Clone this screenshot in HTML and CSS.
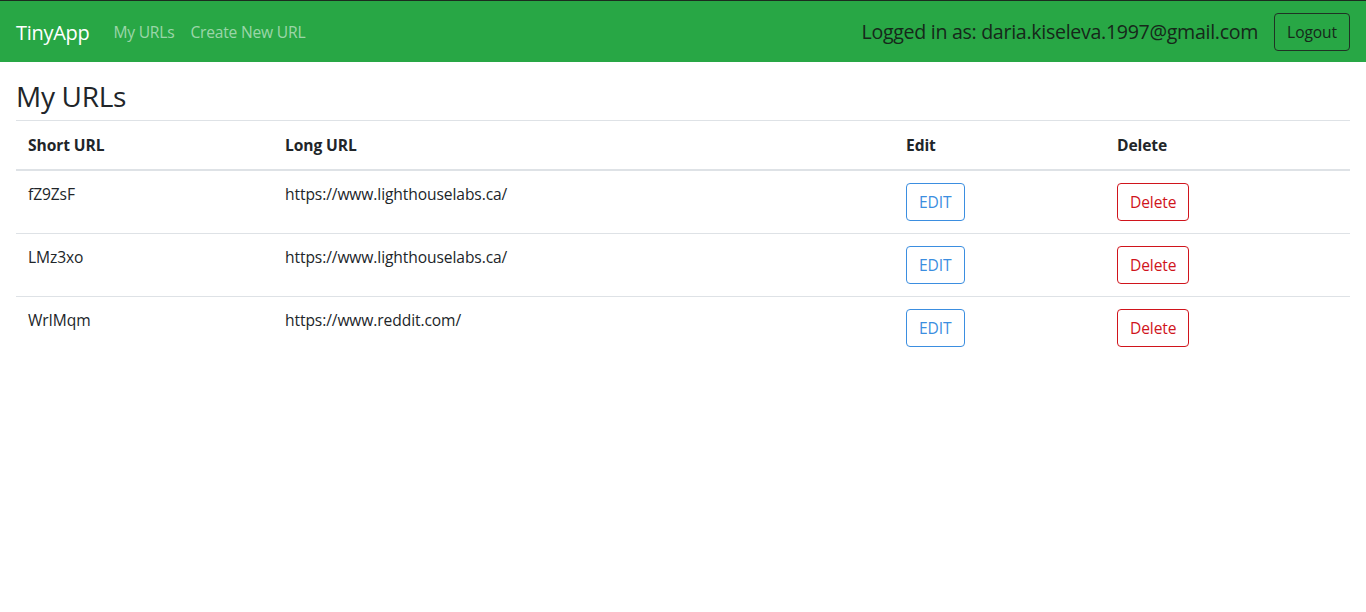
FILE: index.html
```html
<!DOCTYPE html>
<html lang="en">
<head>
<meta charset="utf-8">
<title>TinyApp</title>
<link rel="stylesheet" href="styles.css">
</head>
<body>
<nav class="navbar">
  <div class="nav-left">
    <a class="brand" href="#">TinyApp</a>
    <a class="nav-link" href="#">My URLs</a>
    <a class="nav-link" href="#">Create New URL</a>
  </div>
  <div class="nav-right">
    <span class="user">Logged in as: daria.kiseleva.1997@gmail.com</span>
    <button class="btn btn-dark">Logout</button>
  </div>
</nav>
<main class="content">
  <h2 class="title">My URLs</h2>
  <table class="table">
    <thead>
      <tr>
        <th class="c-short">Short URL</th>
        <th class="c-long">Long URL</th>
        <th class="c-edit">Edit</th>
        <th class="c-del">Delete</th>
      </tr>
    </thead>
    <tbody>
      <tr>
        <td>fZ9ZsF</td>
        <td>https://www.lighthouselabs.ca/</td>
        <td><button class="btn btn-blue">EDIT</button></td>
        <td><button class="btn btn-red">Delete</button></td>
      </tr>
      <tr>
        <td>LMz3xo</td>
        <td>https://www.lighthouselabs.ca/</td>
        <td><button class="btn btn-blue">EDIT</button></td>
        <td><button class="btn btn-red">Delete</button></td>
      </tr>
      <tr>
        <td>WrIMqm</td>
        <td>https://www.reddit.com/</td>
        <td><button class="btn btn-blue">EDIT</button></td>
        <td><button class="btn btn-red">Delete</button></td>
      </tr>
    </tbody>
  </table>
</main>
</body>
</html>
```
FILE: styles.css
```css
* { box-sizing: border-box; }
html, body { margin: 0; padding: 0; }
body {
  font-family: "Open Sans", "Noto Sans", sans-serif;
  font-size: 16px;
  line-height: 1.5;
  color: #212529;
  background: #fff;
}
.navbar {
  display: flex;
  align-items: center;
  justify-content: space-between;
  height: 62px;
  padding: 0 16px;
  background: #28a745;
  border-top: 1px solid #1c2b1f;
}
.nav-left { display: flex; align-items: center; padding-top: 2px; }
.brand {
  color: #fff;
  font-size: 20px;
  text-decoration: none;
  margin-right: 16px;
  letter-spacing: -0.3px;
}
.nav-link {
  color: rgba(255,255,255,0.55);
  text-decoration: none;
  padding: 0 8px;
  font-size: 15.6px;
  letter-spacing: -0.2px;
}
.nav-right { display: flex; align-items: center; }
.user {
  font-size: 19.6px;
  color: #16281a;
  margin-right: 16px;
  letter-spacing: -0.3px;
}
.btn {
  font-family: inherit;
  font-size: 15.6px;
  line-height: 24px;
  padding: 6px 12px;
  background: transparent;
  border-radius: 4px;
  cursor: pointer;
  letter-spacing: -0.1px;
}
.btn-dark { border: 1px solid #1f3324; color: #16281a; margin-top: 1px; }
.btn-blue { border: 1px solid #3b8ee0; color: #3b8ee0; }
.btn-red { border: 1px solid #d0141c; color: #d0141c; }
.content { padding: 15px 16px 0; }
.title {
  font-size: 28px;
  font-weight: 400;
  line-height: 38px;
  margin: 0 0 5px;
  letter-spacing: -0.3px;
}
.table {
  width: 100%;
  border-collapse: collapse;
  font-size: 15.6px;
  letter-spacing: -0.1px;
}
.table th, .table td {
  padding: 12px;
  text-align: left;
  vertical-align: top;
  border-top: 1px solid #dee2e6;
}
.table th { font-weight: 700; padding-top: 13px; padding-bottom: 12px; }
.table thead th { border-bottom: 2px solid #dee2e6; }
.c-short { width: 257px; }
.c-long { width: 621px; }
.c-edit { width: 211px; }
```
